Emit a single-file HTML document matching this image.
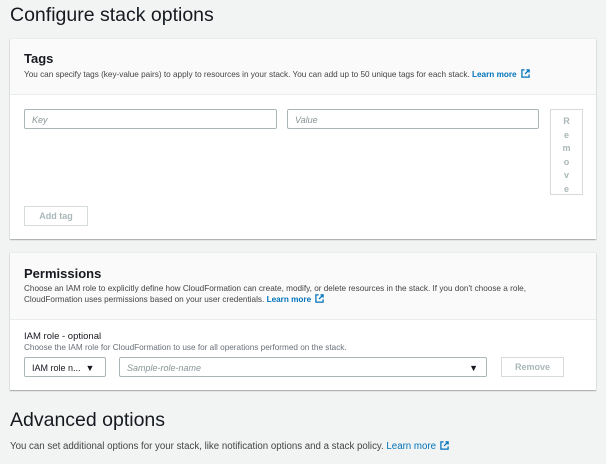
<!DOCTYPE html>
<html><head><style>
body{margin:0;width:606px;height:464px;background:#f2f3f3;font-family:"Liberation Sans",sans-serif;color:#16191f;position:relative;overflow:hidden}
.a{position:absolute}
.h1{font-size:19.5px;color:#16191f}
.panel{background:#fff;left:10px;width:586px;box-shadow:0 1px 1px rgba(0,0,0,.3),0 0 0 1px #eaeded}
.hd{background:#fafafa;border-bottom:1px solid #eaeded;left:0;top:0;width:586px}
.t{font-size:13px;font-weight:bold}
.s{font-size:8.2px;color:#444;line-height:10px;white-space:nowrap}
.lm{color:#0073bb;font-weight:bold}
.inp{border:1px solid #aab7b8;border-radius:2px;background:#fff;font-size:9px;font-style:italic;color:#879596;box-sizing:border-box;padding:5px 7px}
.btn{border:1px solid #d5dbdb;background:#fff;font-size:9px;font-weight:bold;color:#aab7b8;box-sizing:border-box;text-align:center}
.ext{display:inline-block;width:9px;height:9px;margin-left:4px;vertical-align:-1px}
</style></head><body>
<svg width="0" height="0" style="position:absolute"><symbol id="e" viewBox="0 0 10 10"><path d="M4 1H1v8h8V6M6 1h3v3M9 1L4.5 5.5" fill="none" stroke="#0073bb" stroke-width="1.4"/></symbol></svg>
<div class="a h1" style="left:10px;top:4px">Configure stack options</div>
<div class="a panel" style="top:39px;height:200px">
 <div class="a hd" style="height:55px"></div>
 <div class="a t" style="left:14px;top:12px">Tags</div>
 <div class="a s" style="left:14px;top:30px">You can specify tags (key-value pairs) to apply to resources in your stack. You can add up to 50 unique tags for each stack. <span class="lm">Learn more</span><svg class="ext"><use href="#e"/></svg></div>
 <div class="a inp" style="left:14px;top:70px;width:253px;height:20px">Key</div>
 <div class="a inp" style="left:277px;top:70px;width:252px;height:20px">Value</div>
 <div class="a btn" style="left:540px;top:70px;width:33px;height:86px;line-height:13.5px;padding-top:5px">R<br>e<br>m<br>o<br>v<br>e</div>
 <div class="a btn" style="left:14px;top:167px;width:64px;height:20px;line-height:18px">Add tag</div>
</div>
<div class="a panel" style="top:253px;height:137px">
 <div class="a hd" style="height:66px"></div>
 <div class="a t" style="left:14px;top:13px">Permissions</div>
 <div class="a s" style="left:14px;top:31px">Choose an IAM role to explicitly define how CloudFormation can create, modify, or delete resources in the stack. If you don't choose a role,<br>CloudFormation uses permissions based on your user credentials. <span class="lm">Learn more</span><svg class="ext"><use href="#e"/></svg></div>
 <div class="a" style="left:14px;top:78px;font-size:9.5px">IAM role - optional</div>
 <div class="a s" style="left:14px;top:90px;color:#687078">Choose the IAM role for CloudFormation to use for all operations performed on the stack.</div>
 <div class="a inp" style="left:14px;top:104px;width:82px;height:20px;font-style:normal;color:#16191f">IAM role n... &nbsp;▼</div>
 <div class="a inp" style="left:109px;top:104px;width:368px;height:20px">Sample-role-name<span style="position:absolute;right:8px;font-style:normal;color:#16191f">▼</span></div>
 <div class="a btn" style="left:491px;top:104px;width:63px;height:20px;line-height:18px">Remove</div>
</div>
<div class="a h1" style="left:10px;top:409px">Advanced options</div>
<div class="a" style="left:10px;top:441px;font-size:9.7px;color:#444;white-space:nowrap">You can set additional options for your stack, like notification options and a stack policy. <span style="color:#0073bb">Learn more</span><svg class="ext"><use href="#e"/></svg></div>
</body></html>
